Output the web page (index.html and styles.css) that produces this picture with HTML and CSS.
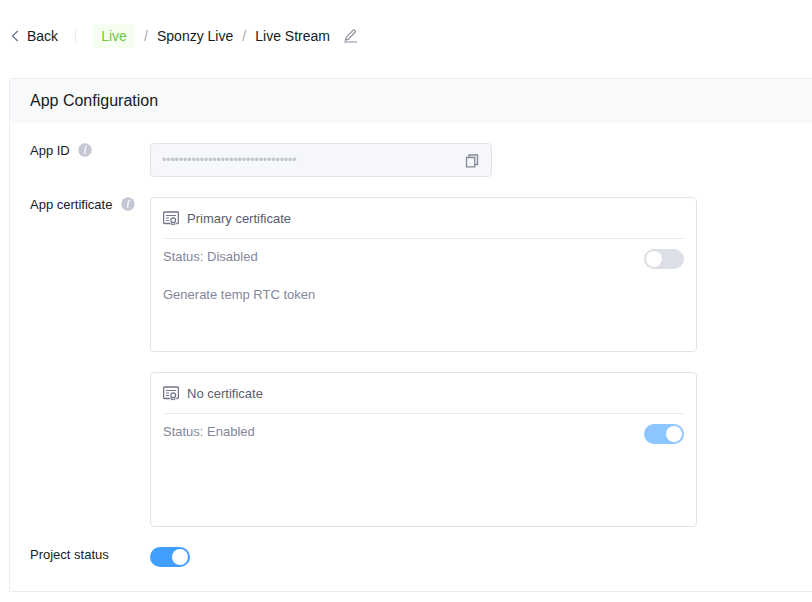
FILE: index.html
```html
<!DOCTYPE html>
<html lang="en">
<head>
<meta charset="utf-8">
<title>App Configuration</title>
<link rel="stylesheet" href="styles.css">
</head>
<body>
<svg class="defs" width="0" height="0" aria-hidden="true">
  <symbol id="info" viewBox="0 0 14 14">
    <circle cx="7" cy="7" r="6.7" fill="#c6c7d4"/>
    <circle cx="7.9" cy="3.7" r=".9" fill="#fff"/>
    <path d="M6.2 5.9h1.2L6.5 10.3h1" fill="none" stroke="#fff" stroke-width="1.1"/>
  </symbol>
  <symbol id="certificate" viewBox="0 0 16 15">
    <path d="M7.5 12.5H1.6a1 1 0 0 1-1-1V2a1 1 0 0 1 1-1h12.8a1 1 0 0 1 1 1v9.5a1 1 0 0 1-1 1h-1.2" fill="none" stroke="#73758a" stroke-width="1.3"/>
    <path d="M3 4.5h10M3 7h3M3 9.5h3" fill="none" stroke="#73758a"/>
    <circle cx="10.2" cy="9.2" r="2.4" fill="none" stroke="#73758a" stroke-width="1.2"/>
    <path d="M8.6 11.3v2.6l1.6-.7 1.6.7v-2.6" fill="none" stroke="#73758a"/>
  </symbol>
</svg>

<nav class="breadcrumb">
  <svg class="back-icon" width="8" height="12" viewBox="0 0 8 12"><path d="M6.8 1 1.5 6l5.3 5" fill="none" stroke="#526f8f" stroke-width="1.1"/></svg>
  <span class="back">Back</span>
  <span class="divider"></span>
  <span class="tag">Live</span>
  <span class="slash first">/</span>
  <span>Sponzy Live</span>
  <span class="slash">/</span>
  <span>Live Stream</span>
  <svg class="edit-icon" width="14" height="14" viewBox="0 0 14 14">
    <path d="M1.5 11.2 2.2 8.2 9.2 1.2a.9.9 0 0 1 1.2 0l.8.8a.9.9 0 0 1 0 1.2L4.4 10.2z" fill="none" stroke="#85879b" stroke-width="1.1"/>
    <path d="M0 13h13" stroke="#c6c7d4" stroke-width="2"/>
  </svg>
</nav>

<main class="panel">
  <h1 class="panel-title">App Configuration</h1>
  <div class="panel-body">
    <section class="row app-id">
      <div class="label">App ID<svg class="info"><use href="#info"/></svg></div>
      <div class="field">
        <span class="secret">••••••••••••••••••••••••••••••••</span>
        <svg width="14" height="15" viewBox="0 0 14 15"><path d="M4 4V2h8.5v9.5H10M1.5 4.5h8.3v9.3H1.5z" fill="none" stroke="#85879b" stroke-width="1.3"/></svg>
      </div>
    </section>
    <section class="row certs">
      <div class="label">App certificate<svg class="info"><use href="#info"/></svg></div>
      <div class="cards">
        <article class="card">
          <h2 class="card-title"><svg width="16" height="15"><use href="#certificate"/></svg>Primary certificate</h2>
          <div class="card-status"><span>Status: Disabled</span><span class="switch off"></span></div>
          <p class="token">Generate temp RTC token</p>
        </article>
        <article class="card">
          <h2 class="card-title"><svg width="16" height="15"><use href="#certificate"/></svg>No certificate</h2>
          <div class="card-status"><span>Status: Enabled</span><span class="switch locked"></span></div>
        </article>
      </div>
    </section>
    <section class="row">
      <div class="label">Project status</div>
      <span class="switch"></span>
    </section>
  </div>
</main>
</body>
</html>
```
FILE: styles.css
```css
* { box-sizing: border-box; }
body {
  margin: 0;
  height: 602px;
  overflow: hidden;
  background: #fff;
  color: #191919;
  font: 13px/16px "Liberation Sans", Arial, sans-serif;
}
h1, h2, p { margin: 0; font-weight: 400; }
svg { display: block; flex: none; }
.defs { position: absolute; }
.breadcrumb {
  display: flex;
  align-items: center;
  height: 78px;
  padding: 0 0 6px 11px;
  font-size: 14px;
  white-space: nowrap;
}
.back { width: 31px; margin-left: 8px; }
.divider { width: 1px; height: 12px; margin: 0 17px; background: #e8eaf1; }
.tag {
  width: 42px;
  height: 24px;
  line-height: 24px;
  text-align: center;
  color: #71c542;
  background: #f6ffef;
}
.slash { width: 4px; margin: 0 9px; color: #a5a9b5; }
.edit-icon { margin-left: 14px; }
.panel {
  height: 514px;
  margin-left: 9px;
  border: 1px solid #ebecf4;
  border-right: 0;
  border-radius: 3px 0 0 0;
}
.panel-title {
  height: 44px;
  padding-left: 20px;
  background: #f8f9fb;
  font-size: 16px;
  line-height: 43px;
}
.panel-body { padding: 20px 0 0 20px; }
.row { display: flex; }
.label {
  display: flex;
  align-items: flex-start;
  width: 120px;
  white-space: nowrap;
}
.info { width: 14px; height: 14px; margin-left: 8.5px; }
.field {
  display: flex;
  align-items: center;
  justify-content: space-between;
  width: 342px;
  height: 34px;
  padding: 0 12px 0 11px;
  border: 1px solid #e2e4ed;
  border-radius: 4px;
  background: #f5f7fa;
}
.secret { color: #c0c4cc; font-size: 12px; }
.certs { margin: 20px 0; }
.cards { display: grid; gap: 20px; }
.card {
  width: 547px;
  height: 155px;
  padding: 0 12px;
  border: 1px solid #e1e2ec;
  border-radius: 4px;
  color: #858799;
}
.card-title {
  display: flex;
  align-items: center;
  gap: 8px;
  height: 41px;
  padding-top: 1px;
  border-bottom: 1px solid #e9ebf5;
  color: #5a5c70;
  font-size: 13px;
}
.card-title svg { margin-top: -1px; }
.card-status {
  display: flex;
  justify-content: space-between;
  height: 30px;
  padding-top: 10px;
}
.token { margin-top: 18px; }
.switch {
  width: 40px;
  height: 20px;
  padding: 2px;
  border-radius: 10px;
  background: #409eff;
}
.switch::after {
  content: "";
  display: block;
  width: 16px;
  height: 16px;
  margin-left: auto;
  border-radius: 50%;
  background: #fff;
}
.switch.off { background: #dcdfe6; }
.switch.off::after { margin-left: 0; }
.switch.locked { background: #8cc5ff; }
```
